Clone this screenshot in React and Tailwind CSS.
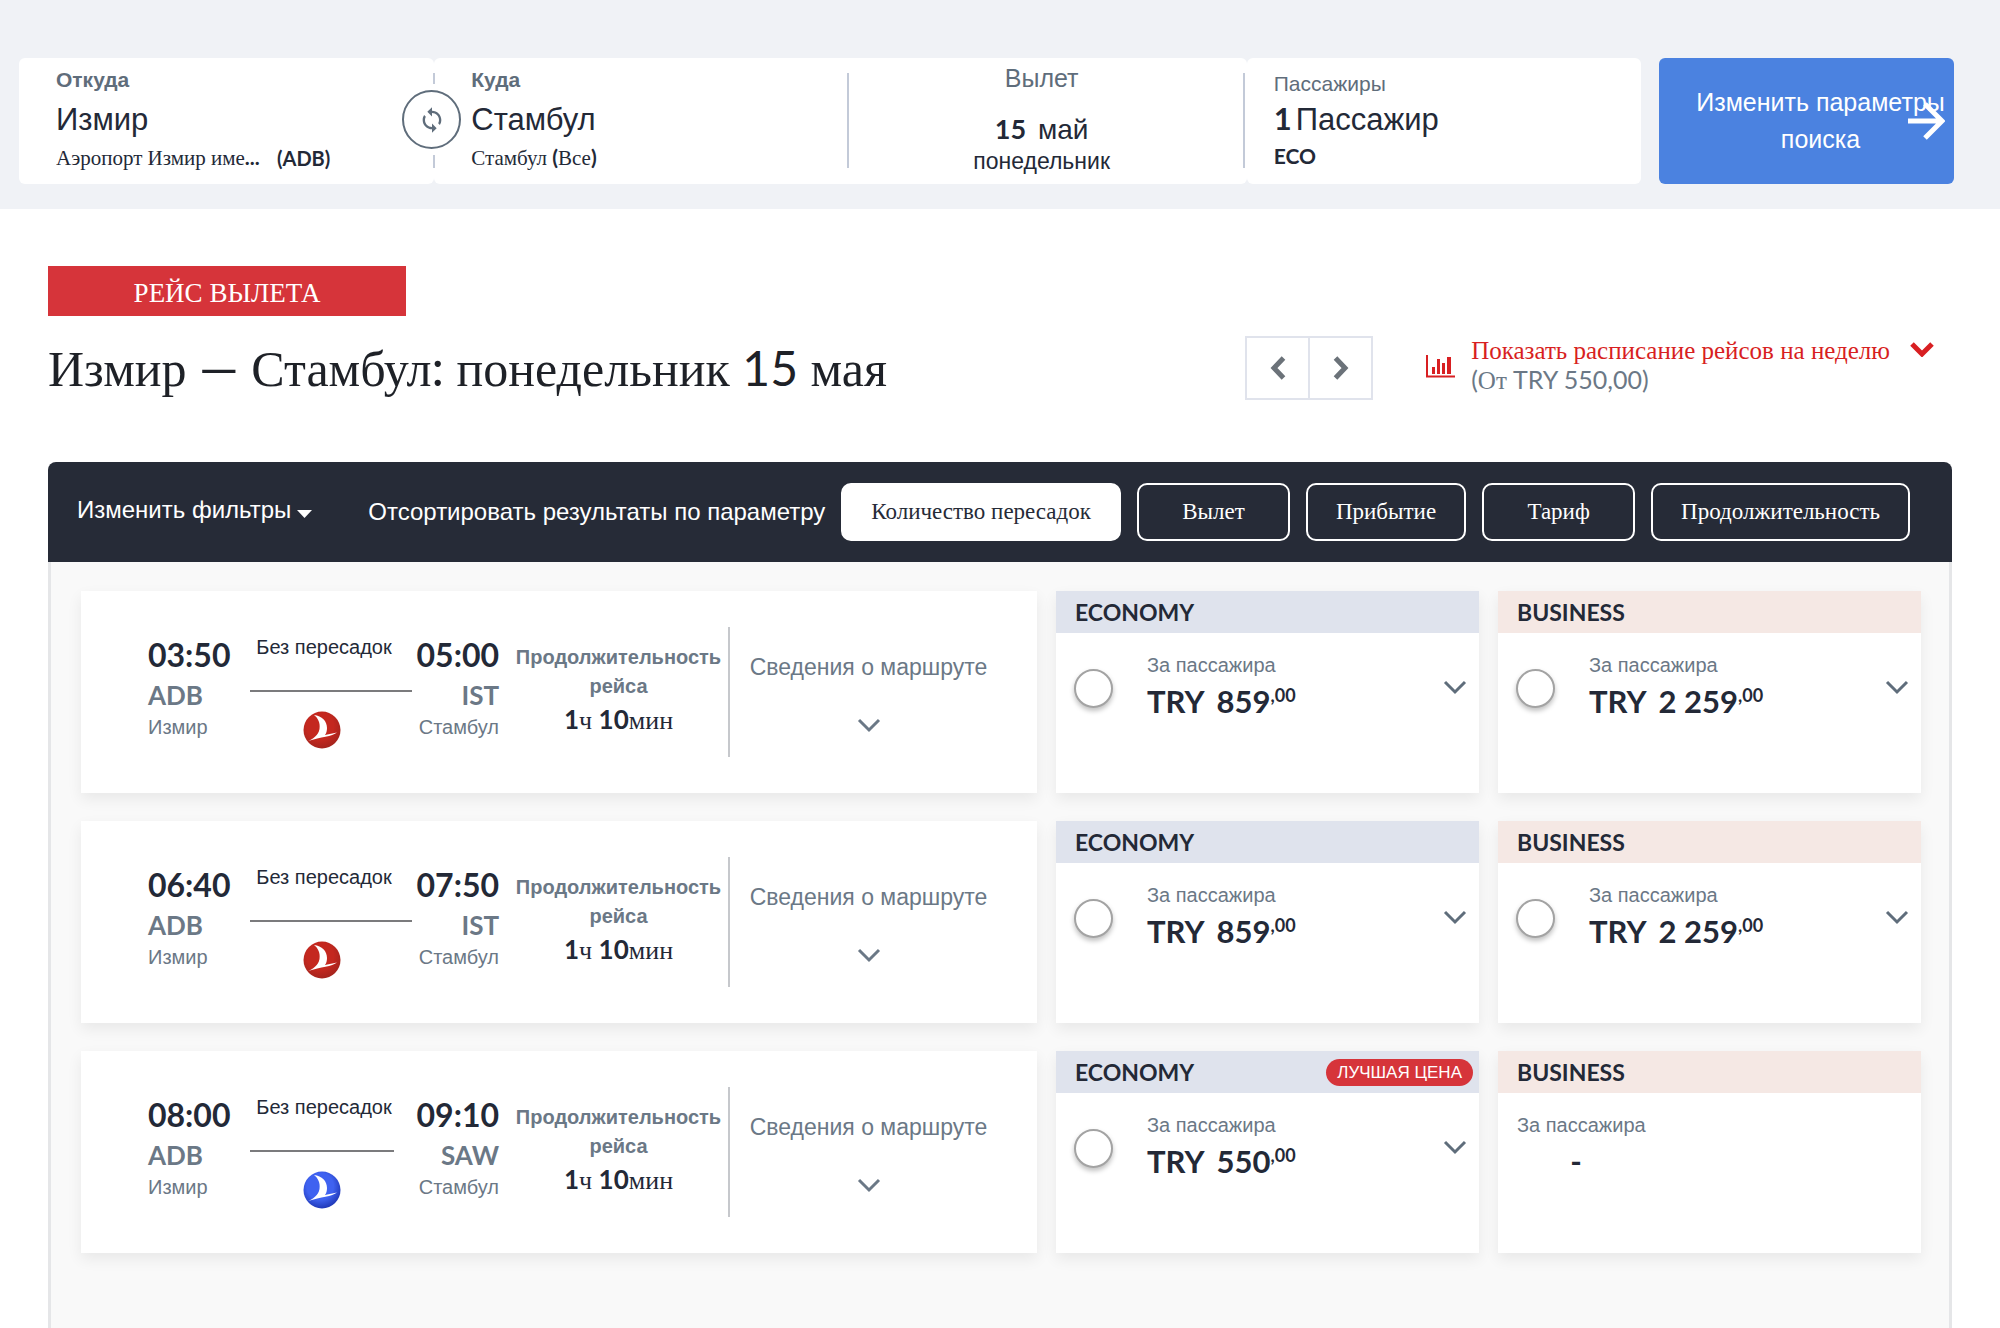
import React from "react";

const SANS = "font-['Liberation_Sans',sans-serif]";
const SERIF = "font-['Liberation_Serif',serif]";
const LATO = "font-['Lato',sans-serif]";

function Chevron({ className = "", strokeWidth = 3 }) {
  return (
    <svg className={className} width="24" height="15" viewBox="0 0 24 15" fill="none" stroke="currentColor" strokeWidth={strokeWidth}>
      <path d="M2 2 L12 12 L22 2" />
    </svg>
  );
}

function AirlineLogo({ blue }) {
  const id = blue ? "logo-blue" : "logo-red";
  return (
    <svg width="38" height="38" viewBox="0 0 38 38">
      <defs>
        <radialGradient id={id} cx="0.45" cy="0.4" r="0.6">
          <stop offset="0.6" stopColor={blue ? "#3f62f0" : "#c4281f"} />
          <stop offset="1" stopColor={blue ? "#2039b8" : "#a5241d"} />
        </radialGradient>
      </defs>
      <circle cx="19" cy="19" r="18.5" fill={`url(#${id})`} />
      <path d="M11 4 C19 5 24 10 24 17 C24 19.500 23.500 22 22 24 L34 21.500 C29 25.500 18 26 5 30 C10 28 15.500 24 16.500 18 C17.500 12 15 7 11 4Z" fill="#fff" />
    </svg>
  );
}

function SearchBar() {
  return (
    <header className="flex gap-[18px] bg-[#f0f2f6] pt-[58px] pr-[46px] pb-[25px] pl-[19px]">
      <div className="grid h-[126px] flex-1 grid-cols-[415fr_414fr_398fr_394fr] whitespace-nowrap text-[#232937]">
        <div className="relative rounded-md bg-white pt-[10px] pl-[37px]">
          <div className={`text-[21px] leading-6 font-bold text-[#5f6d7b] ${SANS}`}>Откуда</div>
          <div className={`mt-2 text-[31px] leading-10 ${SANS}`}>Измир</div>
          <div className={`mt-1 flex text-[21px] leading-7 ${SERIF}`}>
            <span className="w-[208px] truncate">Аэропорт Измир име<span className={`leading-none font-bold ${LATO}`}>...</span></span>
            <span className={`ml-[13px] text-xl leading-7 font-bold ${LATO}`}>(ADB)</span>
          </div>
          <div className="absolute top-[15px] -right-px h-[95px] w-0.5 bg-[#c3cad8]" />
          <div className="absolute top-[26px] -right-[27px] z-10 bg-white py-[6px]">
            <button aria-label="Поменять местами" className="flex size-[59px] items-center justify-center rounded-full border-2 border-[#5f6d7b] bg-white text-[#5f6d7b]">
              <svg width="28" height="28" viewBox="0 0 24 24" fill="currentColor">
                <path d="M12 4V1L8 5l4 4V6c3.31 0 6 2.69 6 6 0 1.01-.25 1.97-.7 2.8l1.46 1.46C19.54 15.03 20 13.57 20 12c0-4.42-3.58-8-8-8zm0 14c-3.31 0-6-2.69-6-6 0-1.01.25-1.97.7-2.8L5.24 7.74C4.46 8.97 4 10.43 4 12c0 4.42 3.58 8 8 8v3l4-4-4-4v3z" />
              </svg>
            </button>
          </div>
        </div>
        <div className="flex items-start rounded-l-md bg-white pt-[10px] pl-[37px]">
          <div className="flex-1">
            <div className={`text-[21px] leading-6 font-bold text-[#5f6d7b] ${SANS}`}>Куда</div>
            <div className={`mt-2 text-[31px] leading-10 ${SANS}`}>Стамбул</div>
            <div className={`mt-1 text-[21px] leading-7 ${SERIF}`}>
              Стамбул <span className={`leading-none font-bold ${LATO}`}>(</span>Все<span className={`leading-none font-bold ${LATO}`}>)</span>
            </div>
          </div>
          <div className="mt-[5px] h-[95px] w-0.5 bg-[#c3cad8]" />
        </div>
        <div className="flex items-start rounded-r-md bg-white pt-[5px]">
          <div className="flex-1 pr-2 text-center">
            <div className={`text-[25px] leading-[30px] text-[#5f6d7b] ${SANS}`}>Вылет</div>
            <div className={`mt-5 text-[28px] leading-[34px] ${SANS}`}>
              <span className={`mr-3 text-[27px] leading-none font-bold ${LATO}`}>15</span>май
            </div>
            <div className={`text-[23px] leading-7 ${SANS}`}>понедельник</div>
          </div>
          <div className="mt-[10px] mr-0.5 h-[95px] w-0.5 bg-[#c3cad8]" />
        </div>
        <div className="rounded-md bg-white pt-[14px] pl-[27px]">
          <div className={`text-[21px] leading-6 text-[#5f6d7b] ${SANS}`}>Пассажиры</div>
          <div className={`mt-1 text-[31px] leading-10 ${SANS}`}>
            <span className={`mr-1 leading-none font-bold ${LATO}`}>1</span>Пассажир
          </div>
          <div className={`mt-0.5 text-[21px] leading-7 font-bold ${LATO}`}>ECO</div>
        </div>
      </div>
      <button className={`relative w-[295px] rounded-md bg-[#4b82e0] pl-[28px] text-[25px] leading-[37px] text-white ${SANS}`}>
        Изменить параметры поиска
        <svg className="absolute top-[44px] right-[9px]" width="38" height="38" viewBox="0 0 38 38" fill="none" stroke="currentColor" strokeWidth="5">
          <path d="M1 19 H34 M18 2 L35 19 L18 36" />
        </svg>
      </button>
    </header>
  );
}

function SortButton({ label, selected }) {
  return (
    <button
      className={`h-[58px] min-w-[153px] rounded-[10px] border-2 border-white px-7 text-[23px] leading-8 ${SERIF} ${selected ? "bg-white text-[#262b37]" : "text-white"}`}
    >
      {label}
    </button>
  );
}

function FlightCard({ flight }) {
  return (
    <article className="flex bg-white py-9 pl-[67px] whitespace-nowrap shadow-[0_6px_14px_rgba(0,0,0,0.07)]">
      <div className="w-[102px] pt-[10px]">
        <div className={`text-[32px] leading-9 font-bold text-[#232937] ${LATO}`}>{flight.dep}</div>
        <div className={`mt-1 text-[26px] leading-9 font-bold text-[#6b7886] ${LATO}`}>ADB</div>
        <div className={`text-xl leading-7 text-[#6b7886] ${SANS}`}>Измир</div>
      </div>
      <div className="w-[162px] pt-2">
        <div className={`w-36 pl-1 text-center text-xl leading-6 text-[#232937] ${SANS}`}>Без пересадок</div>
        <div className={`mt-[31px] h-0.5 bg-[#7b7b7d] ${flight.blue ? "w-36" : "w-full"}`} />
        <div className="mt-[19px] flex w-36 justify-center">
          <AirlineLogo blue={flight.blue} />
        </div>
      </div>
      <div className="flex w-[87px] flex-col items-end pt-[10px]">
        <div className={`text-[32px] leading-9 font-bold text-[#232937] ${LATO}`}>{flight.arr}</div>
        <div className={`mt-1 text-[26px] leading-9 font-bold text-[#6b7886] ${LATO}`}>{flight.to}</div>
        <div className={`text-xl leading-7 text-[#6b7886] ${SANS}`}>Стамбул</div>
      </div>
      <div className="ml-[10px] w-[219px] pt-4 text-center">
        <div className={`text-xl leading-[29px] font-bold text-[#6b7886] ${SANS}`}>
          Продолжительность<br />рейса
        </div>
        <div className={`mt-0.5 text-[26px] leading-9 text-[#232937] ${SERIF}`}>
          <span className={`leading-none font-bold ${LATO}`}>1</span>ч <span className={`leading-none font-bold ${LATO}`}>10</span>мин
        </div>
      </div>
      <div className="w-0.5 bg-[#c6c8cc]" />
      <div className="mr-[30px] flex-1">
        <button className={`flex w-full flex-col items-center pt-6 text-[23px] leading-8 text-[#6b7886] ${SANS}`}>
          Сведения о маршруте
          <Chevron className="mt-[35px]" />
        </button>
      </div>
    </article>
  );
}

function PriceCard({ kind, price, best, group }) {
  const economy = kind === "ECONOMY";
  return (
    <article className="bg-white whitespace-nowrap text-[#232937] shadow-[0_6px_14px_rgba(0,0,0,0.07)]">
      <div className={`flex h-[42px] items-center justify-between pr-[6px] pl-[19px] ${economy ? "bg-[#dfe3ed]" : "bg-[#f5e8e4]"}`}>
        <h3 className={`text-[23px] leading-10 font-bold ${LATO}`}>{kind}</h3>
        {best && <span className={`rounded-full bg-[#d6343a] px-[11px] text-[17px] leading-[27px] text-white ${SANS}`}>ЛУЧШАЯ ЦЕНА</span>}
      </div>
      {price ? (
        <label className="flex items-start pr-3 pl-[18px]">
          <input
            type="radio"
            name={group}
            className="mt-9 size-[39px] shrink-0 appearance-none rounded-full border-2 border-[#a3a3a3] bg-white shadow-[0_3px_5px_rgba(0,0,0,0.25)] checked:border-[12px] checked:border-[#232937]"
          />
          <span className="ml-[34px] flex-1 pt-5">
            <span className={`block text-xl leading-6 text-[#6b7886] ${SANS}`}>За пассажира</span>
            <span className={`mt-[6px] flex text-[31px] leading-9 font-bold ${LATO}`}>
              TRY<span className="ml-3">{price}</span>
              <span className="text-lg leading-6">,00</span>
            </span>
          </span>
          <Chevron className="mt-[47px] text-[#5f6d7b]" />
        </label>
      ) : (
        <div className="pt-5 pl-[19px]">
          <div className={`text-xl leading-6 text-[#6b7886] ${SANS}`}>За пассажира</div>
          <div className={`mt-[6px] w-[118px] text-center text-[31px] leading-9 font-bold ${LATO}`}>-</div>
        </div>
      )}
    </article>
  );
}

const flights = [
  { dep: "03:50", arr: "05:00", to: "IST", economy: "859", business: "2 259" },
  { dep: "06:40", arr: "07:50", to: "IST", economy: "859", business: "2 259" },
  { dep: "08:00", arr: "09:10", to: "SAW", economy: "550", business: null, best: true, blue: true },
];

export default function App() {
  return (
    <div className="min-h-screen bg-white">
      <SearchBar />
      <main className="px-12 pt-[57px]">
        <div className={`flex h-[50px] w-[358px] items-center justify-center bg-[#d6343a] pt-1 text-[27px] leading-8 text-white ${SERIF}`}>РЕЙС ВЫЛЕТА</div>
        <div className="mt-5 flex items-start pr-[18px] whitespace-nowrap">
          <h1 className={`text-[50px] leading-[66px] text-[#1e2127] ${SERIF}`}>
            Измир <span className={`leading-none ${LATO}`}>—</span> Стамбул<span className={`leading-none ${LATO}`}>:</span> понедельник{" "}
            <span className={`text-5xl leading-none ${LATO}`}>15</span> мая
          </h1>
          <div className="ml-auto flex h-16 w-32 divide-x-2 divide-[#e0e3ec] border-2 border-[#e0e3ec] text-[#6b7279]">
            <button aria-label="Предыдущий день" className="flex flex-1 items-center justify-center">
              <svg width="16" height="24" viewBox="0 0 16 24" fill="none" stroke="currentColor" strokeWidth="5"><path d="M13.500 2 L4 12 L13.500 22" /></svg>
            </button>
            <button aria-label="Следующий день" className="flex flex-1 items-center justify-center">
              <svg width="16" height="24" viewBox="0 0 16 24" fill="none" stroke="currentColor" strokeWidth="5"><path d="M2.500 2 L12 12 L2.500 22" /></svg>
            </button>
          </div>
          <button className="ml-[53px] flex items-start text-left text-[#d81f22]">
            <svg className="mt-[19px]" width="29" height="23" viewBox="0 0 29 23" fill="currentColor">
              <path d="M0 0 H2 V20.500 H29 V22.500 H0Z M6 12 H9 V19 H6Z M11 4 H14 V19 H11Z M16 8 H19 V19 H16Z M21 2 H25 V19 H21Z" />
            </svg>
            <span className={`ml-4 block text-[25px] leading-[30px] ${SERIF}`}>
              Показать расписание рейсов на неделю
              <span className="block text-[#6b7886]">
                <span className={`leading-none ${LATO}`}>(</span>От <span className={`leading-none ${LATO}`}>TRY 550,00)</span>
              </span>
            </span>
            <Chevron className="mt-[6px] ml-5" strokeWidth={5} />
          </button>
        </div>

        <section className="mt-[60px]">
          <div className="flex h-[100px] items-center rounded-t-lg bg-[#262b37] pr-[42px] pl-[29px] whitespace-nowrap text-white">
            <button className={`flex items-center gap-[6px] pb-1 text-2xl leading-8 ${SANS}`}>
              <span>Изменить фильтры</span>
              <svg className="mt-2" width="15" height="8" viewBox="0 0 15 8" fill="currentColor"><path d="M0 0 H15 L7.500 8Z" /></svg>
            </button>
            <div className="ml-auto flex items-center gap-4">
              <span className={`text-2xl leading-8 ${SANS}`}>Отсортировать результаты по параметру</span>
              <SortButton label="Количество пересадок" selected />
              <SortButton label="Вылет" />
              <SortButton label="Прибытие" />
              <SortButton label="Тариф" />
              <SortButton label="Продолжительность" />
            </div>
          </div>
          <div className="flex flex-col gap-7 border-x-[3px] border-[#e5e6e8] bg-[#f9f9f9] pt-[29px] pr-7 pb-[77px] pl-[30px]">
            {flights.map((f, i) => (
              <div key={i} className="grid min-h-[202px] grid-cols-[956fr_423fr_423fr] gap-[19px]">
                <FlightCard flight={f} />
                <PriceCard kind="ECONOMY" price={f.economy} best={f.best} group="fare" />
                <PriceCard kind="BUSINESS" price={f.business} group="fare" />
              </div>
            ))}
          </div>
        </section>
      </main>
    </div>
  );
}
